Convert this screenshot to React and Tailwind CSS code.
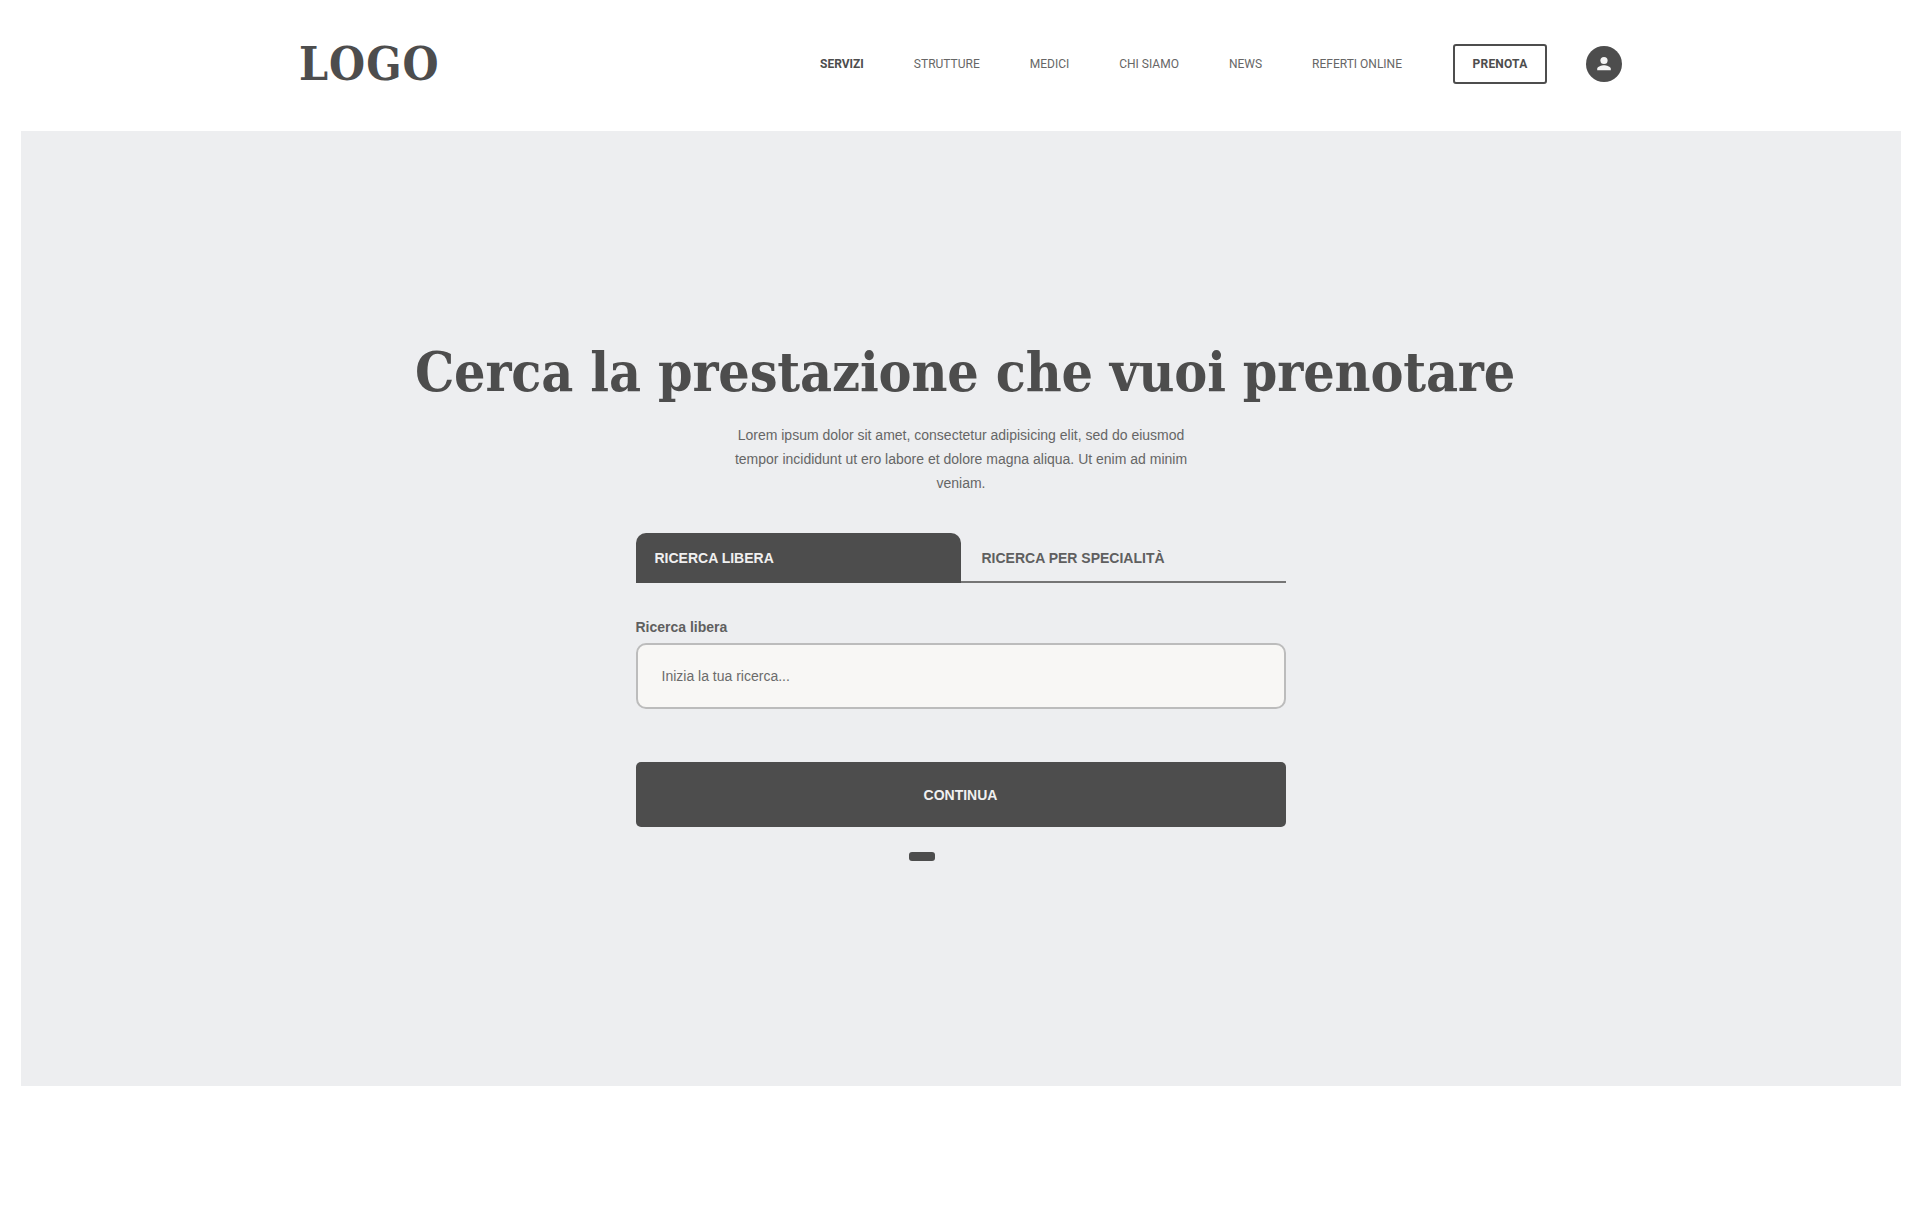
const serif = "font-['DejaVu_Serif_Condensed','DejaVu_Serif',serif]";

function Header() {
  const items = ['STRUTTURE', 'MEDICI', 'CHI SIAMO', 'NEWS', 'REFERTI ONLINE'];
  return (
    <header className="h-[131px] flex items-center pl-[299px] pr-[298px] pb-[4px] justify-between">
      <div className={`${serif} font-bold text-[46px] leading-none text-[#4d4d4d] tracking-[1px]`}>LOGO</div>
      <nav className="flex items-center gap-[50px] font-['Roboto',sans-serif] text-[12px] text-[#666666]">
        <a className="font-bold text-[#4d4d4d]">SERVIZI</a>
        {items.map((t) => <a key={t}>{t}</a>)}
        <button className="ml-[1px] w-[94px] h-[40px] border-2 border-[#4d4d4d] rounded-[3px] font-bold text-[#4d4d4d] tracking-[0.2px]">PRENOTA</button>
        <div className="w-[36px] h-[36px] -ml-[11px] rounded-full bg-[#4d4d4d] flex items-center justify-center">
          <svg width="18" height="18" viewBox="0 0 18 18" fill="#f4f4f4">
            <circle cx="9" cy="5.5" r="3.6" />
            <path d="M2.2 15.2v-1.4c0-2.3 4.5-3.6 6.8-3.6s6.8 1.3 6.8 3.6v1.4z" />
          </svg>
        </div>
      </nav>
    </header>
  );
}

export default function App() {
  return (
    <div className="min-h-[1232px] bg-white font-['Liberation_Sans',sans-serif]">
      <Header />
      <main className="ml-[21px] mr-[19px] h-[955px] bg-[#edeef0] flex flex-col items-center pt-[205px]">
        <h1 className={`${serif} ml-[8px] font-bold text-[55px] leading-[72px] text-[#4d4d4d] tracking-[-0.15px] whitespace-nowrap`}>Cerca la prestazione che vuoi prenotare</h1>
        <p className="mt-[15px] w-[480px] text-center text-[14px] leading-[24px] text-[#666666]">
          Lorem ipsum dolor sit amet, consectetur adipisicing elit, sed do eiusmod<br />tempor incididunt ut ero labore et dolore magna aliqua. Ut enim ad minim<br />veniam.
        </p>
        <section className="mt-[38px] -ml-[1px] w-[650px]">
          <div className="flex h-[50px]">
            <div className="w-[325px] bg-[#4d4d4d] rounded-t-[10px] flex items-center pl-[19px] text-[14px] font-bold text-[#f0f0f0]">RICERCA LIBERA</div>
            <div className="flex-1 border-b-2 border-[#757575] flex items-center pl-[21px] pt-[2px] text-[14px] font-bold text-[#5f5f5f]">RICERCA PER SPECIALITÀ</div>
          </div>
          <label className="block mt-[36px] text-[14px] leading-[16px] font-bold text-[#5f5f5f]">Ricerca libera</label>
          <div className="mt-[8px] h-[66px] border-2 border-[#bcbcbc] rounded-[10px] bg-[#f8f7f5] flex items-center pl-[24px] text-[14px] text-[#6b6b6b]">Inizia la tua ricerca...</div>
          <button className="mt-[53px] w-full h-[65px] pt-[2px] rounded-[5px] bg-[#4d4d4d] text-[14px] font-bold text-[#f0f0f0]">CONTINUA</button>
          <div className="mt-[25px] ml-[273px] w-[26px] h-[9px] rounded-[3px] bg-[#4d4d4d]" />
        </section>
      </main>
    </div>
  );
}
